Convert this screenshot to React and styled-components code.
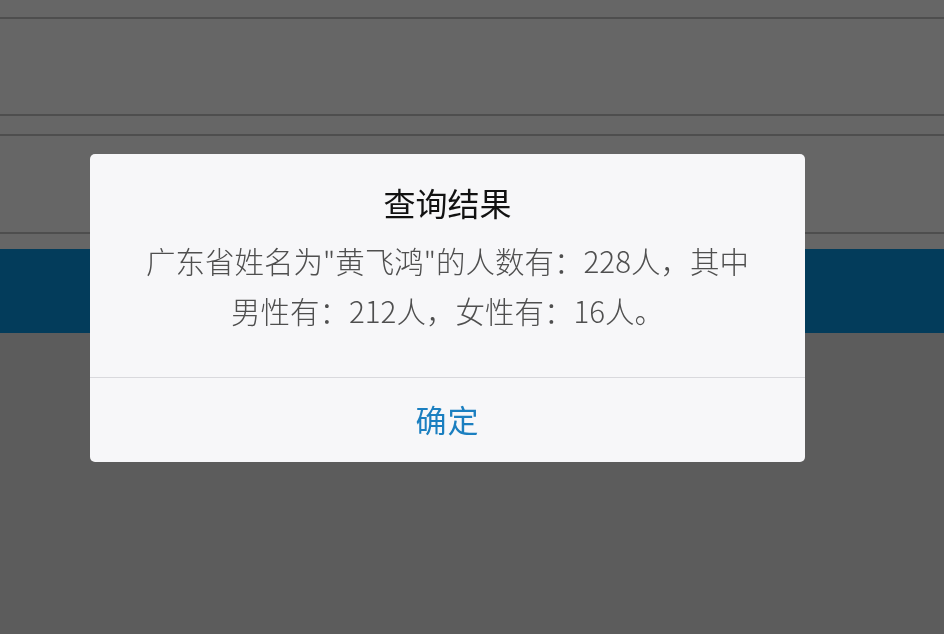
import styled, { createGlobalStyle } from "styled-components";

const GlobalStyle = createGlobalStyle`
  html, body {
    margin: 0;
    padding: 0;
    height: 100%;
    background: #5c5c5c;
  }
  body {
    font-family: "Noto Sans CJK SC", "Noto Sans", sans-serif;
  }
`;

function App() {
  return (
    <>
      <GlobalStyle />
      <Page>
        <FormRow height={17} />
        <FormRow height={95} />
        <FormRow height={18} />
        <FormRow height={96} />
        <Gap />
        <Banner />
      </Page>
      <Overlay>
        <Dialog>
          <Body>
            <Title>查询结果</Title>
            <Message>
              广东省姓名为"黄飞鸿"的人数有：228人，其中
              <br />
              男性有：212人，女性有：16人。
            </Message>
          </Body>
          <Footer>
            <OkButton>确定</OkButton>
          </Footer>
        </Dialog>
      </Overlay>
    </>
  );
}

export default App;

const Page = styled.div`
  display: flex;
  flex-direction: column;
  min-height: 634px;
  background: #5c5c5c;
`;

const FormRow = styled.div`
  height: ${(p) => p.height}px;
  background: #666666;
  border-bottom: 2px solid #4e4e4e;
`;

const Gap = styled.div`
  height: 15px;
  background: #666666;
`;

const Banner = styled.div`
  height: 84px;
  background: #033c5b;
`;

const Overlay = styled.div`
  position: fixed;
  inset: 0;
  display: flex;
  align-items: flex-start;
  padding: 154px 0 0 90px;
`;

const Dialog = styled.div`
  width: 715px;
  background: #f7f7f9;
  border-radius: 5px;
  display: flex;
  flex-direction: column;
  overflow: hidden;
`;

const Body = styled.div`
  display: flex;
  flex-direction: column;
  align-items: center;
  padding: 28px 0 42px;
  border-bottom: 1px solid #d9d9dd;
`;

const Title = styled.div`
  font-size: 32px;
  line-height: 40px;
  color: #111111;
`;

const Message = styled.div`
  margin-top: 13px;
  font-size: 29.5px;
  line-height: 50px;
  color: #4f4f4f;
  text-align: center;
  font-weight: 300;
`;

const Footer = styled.div`
  height: 84px;
  display: flex;
  align-items: center;
  justify-content: center;
  padding-bottom: 3px;
  box-sizing: border-box;
`;

const OkButton = styled.div`
  font-size: 31px;
  color: #1b7fc0;
  letter-spacing: 1px;
`;
